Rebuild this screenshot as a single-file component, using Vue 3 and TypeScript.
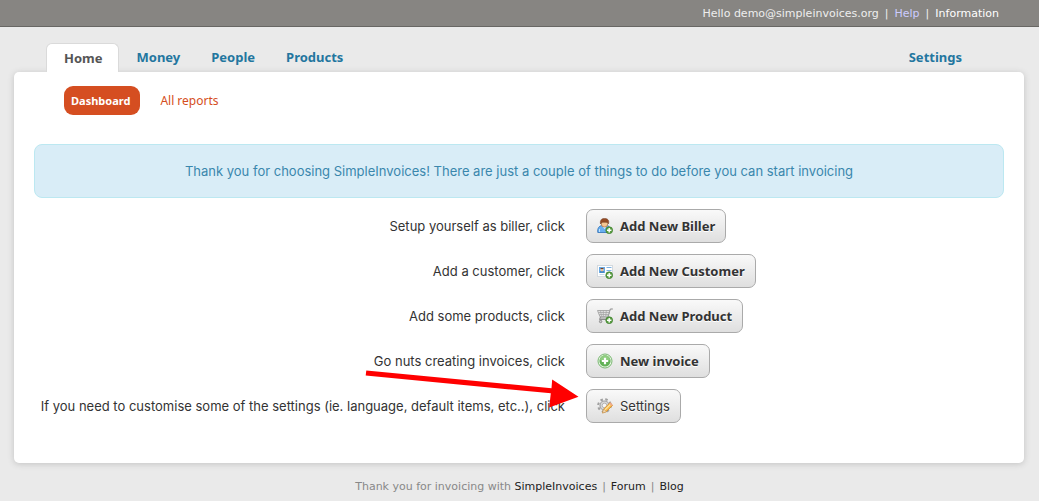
<script setup lang="ts">
type IconName = 'biller' | 'customer' | 'product' | 'invoice' | 'settings'
interface Step {
  text: string
  button: string
  icon: IconName
  strong: boolean
}
const tabs: string[] = ['Home', 'Money', 'People', 'Products']
const steps: Step[] = [
  { text: 'Setup yourself as biller, click', button: 'Add New Biller', icon: 'biller', strong: true },
  { text: 'Add a customer, click', button: 'Add New Customer', icon: 'customer', strong: true },
  { text: 'Add some products, click', button: 'Add New Product', icon: 'product', strong: true },
  { text: 'Go nuts creating invoices, click', button: 'New invoice', icon: 'invoice', strong: true },
  {
    text: 'If you need to customise some of the settings (ie. language, default items, etc..), click',
    button: 'Settings',
    icon: 'settings',
    strong: false,
  },
]
const hasBadge = (icon: IconName): boolean => ['biller', 'customer', 'product'].includes(icon)
</script>

<template>
  <div class="page">
    <header class="topbar">
      <span>Hello demo@simpleinvoices.org</span>
      <span>|</span>
      <a class="help" href="#">Help</a>
      <span>|</span>
      <a class="info-link" href="#">Information</a>
    </header>

    <nav class="tabs">
      <a v-for="(tab, i) in tabs" :key="tab" href="#" class="tab" :class="{ active: i === 0 }">{{ tab }}</a>
      <a href="#" class="tab last">Settings</a>
    </nav>

    <main class="panel">
      <nav class="subnav">
        <a href="#" class="sub current">Dashboard</a>
        <a href="#" class="sub">All reports</a>
      </nav>

      <p class="notice">
        Thank you for choosing SimpleInvoices! There are just a couple of things to do before you can start invoicing
      </p>

      <div class="steps">
        <div v-for="step in steps" :key="step.button" class="step">
          <div class="label">
            {{ step.text }}
            <svg v-if="step.icon === 'settings'" class="arrow" width="220" height="48" viewBox="0 0 220 48">
              <path d="M6.300 5.500 191.500 23.200 192.200 14.500 218.500 31.800 189.200 42.600 190.800 28.300 5.700 10.500Z" fill="#f00" />
            </svg>
          </div>
          <div>
            <button type="button" class="btn" :class="{ strong: step.strong }">
              <svg width="16" height="16" viewBox="0 0 16 16" aria-hidden="true">
                <g v-if="step.icon === 'biller'">
                  <path d="M.8 14.500c-.6-4.200 1.200-6.600 4.200-7h4.800c2.600.4 3.900 2.400 3.900 7Z" fill="#69aff0" stroke="#2c6eb5" stroke-width=".8" />
                  <path d="M5.200 8h4.600L7.500 11Z" fill="#e8f5ff" />
                  <rect x="4.300" y="2.500" width="6.400" height="6.500" rx="3" fill="#f5c591" stroke="#a86c3f" stroke-width=".7" />
                  <path d="M3.500 6C2.800 2.200 4.500.4 7.500.4s5 1.800 4 5.400L10 4.300 5.200 4.200Z" fill="#944a24" stroke="#6b3519" stroke-width=".5" />
                  <path d="M2.500 11v3" stroke="#bfe1ff" />
                </g>
                <g v-else-if="step.icon === 'customer'">
                  <rect x=".5" y="2.500" width="15" height="11" fill="#fff" stroke="#d3d9de" />
                  <rect x="2.500" y="4.500" width="5" height="5" fill="#8dc4f5" stroke="#6aa9e2" />
                  <path d="M3 9.500V8.300h4v1.200Z" fill="#286fb4" />
                  <rect x="3.800" y="5.500" width="2.400" height="2.700" fill="#efbc8b" />
                  <path d="M3.500 6V5h3v1Z" fill="#73412a" />
                  <path d="M9.500 4.500h5M9.500 7.500h5" stroke="#7fb2e4" />
                  <path d="M2.500 11.500h5" stroke="#c9dcec" />
                </g>
                <g v-else-if="step.icon === 'product'" fill="none" stroke="#8a8a8a">
                  <path d="M15.800 1H13.300l-2.600 9H3" />
                  <path d="M.5 2.500h12.300L11 8.200 3 8.800Z" fill="#e2e2e2" stroke="#999" stroke-width=".8" />
                  <path d="M1.500 4.500h10.700M2.300 6.500h9.200M3.500 2.500l1 6M6.300 2.500v6M9.300 2.500 8.800 8" stroke="#a0a0a0" stroke-width=".7" />
                  <path d="M3.500 8.800 2.500 11.500h9" />
                  <circle cx="3.600" cy="13.500" r="1.200" fill="#ccc" />
                </g>
                <g v-else-if="step.icon === 'invoice'">
                  <circle cx="8" cy="8" r="7" fill="#eef8eb" stroke="#6bb062" stroke-width=".9" />
                  <circle cx="8" cy="8" r="5.600" fill="#62b257" />
                  <path d="M3 7a5 5 0 0 1 10 0q-5 2-10 0" fill="#8fcd80" />
                  <path d="M8 4.800v6.400M4.800 8h6.400" stroke="#fff" stroke-width="2.200" />
                </g>
                <g v-else>
                  <circle cx="7.500" cy="7.500" r="6.300" fill="none" stroke="#a0a0a0" stroke-width="2" stroke-dasharray="2.500 2.448" />
                  <circle cx="7.500" cy="7.500" r="4.500" fill="#d8d8d8" stroke="#a4a4a4" stroke-width="1.200" />
                  <circle cx="7.500" cy="7.500" r="2.300" fill="#f6f6f6" stroke="#aaa" stroke-width=".8" />
                  <path d="m5.500 15 1.200-4 6.200-6.200 2.600 2.600-6.200 6.300Z" fill="#f9b94a" stroke="#d08a2c" stroke-width=".8" />
                  <path d="m7.800 12 5.800-5.700" stroke="#ffe49b" stroke-width="1.200" />
                  <path d="m12.200 5.500 1.200-1.200 2.300 2.400-1.100 1.300Z" fill="#eea888" />
                  <path d="m5.500 15 1.200-4 2.600 2.700Z" fill="#f6dfbd" stroke="#b9905b" stroke-width=".5" />
                </g>
                <g v-if="hasBadge(step.icon)">
                  <circle cx="12.200" cy="12.200" r="3.400" fill="#5da044" stroke="#3b7d2c" stroke-width=".7" />
                  <path d="M12.200 10v4.400M10 12.200h4.400" stroke="#fff" stroke-width="1.400" />
                </g>
              </svg>
              <span>{{ step.button }}</span>
            </button>
          </div>
        </div>
      </div>
    </main>

    <footer class="footer">
      <span>Thank you for invoicing with <a href="#">SimpleInvoices</a></span>
      <span>|</span>
      <a href="#">Forum</a>
      <span>|</span>
      <a href="#">Blog</a>
    </footer>
  </div>
</template>

<style>
body {
  margin: 0;
  background: #eaeaea;
}
</style>

<style scoped>
.page {
  font: 13px/18px Inter, Verdana, sans-serif;
  color: #333;
}
a {
  text-decoration: none;
}
.topbar {
  display: flex;
  justify-content: flex-end;
  gap: 6px;
  height: 26px;
  padding-right: 40px;
  border-bottom: 1px solid #686764;
  background: #878582;
  color: #eee;
  font: 11px/28px Verdana, "DejaVu Sans", sans-serif;
}
.help {
  color: #ccf;
}
.info-link {
  color: #fff;
}
.tabs {
  display: flex;
  gap: 1px;
  margin: 16px 62px 0 46px;
  font: bold 13px/29px "Trebuchet MS", "Noto Sans", sans-serif;
}
.tab {
  height: 29px;
  padding: 0 15px;
  color: #23769f;
}
.tab.active {
  position: relative;
  z-index: 1;
  box-sizing: border-box;
  margin-right: 2px;
  padding: 0 15px 0 17px;
  border: 1px solid #dadada;
  border-bottom: 0;
  border-radius: 6px 6px 0 0;
  background: #fff;
  color: #555;
  line-height: 28px;
}
.tab.last {
  margin-left: auto;
}
.panel {
  margin: 0 15px 0 14px;
  padding: 14px 0 40px;
  border-radius: 5px;
  background: #fff;
  box-shadow: 0 1px 6px #c2c2c2;
}
.subnav {
  display: flex;
  gap: 13px;
  margin-left: 50px;
  font: 12px/29px "Trebuchet MS", "Noto Sans", sans-serif;
}
.sub {
  padding: 0 7px;
  color: #d54e21;
}
.current {
  padding-right: 10px;
  border-radius: 9px;
  background: #d54e21;
  color: #fff;
  font-size: 11px;
  font-weight: bold;
}
.notice {
  margin: 29px 20px 11px;
  padding: 17px 10px;
  border: 1px solid #bce8f1;
  border-radius: 8px;
  background: #d9edf7;
  color: #3a87ad;
  text-align: center;
}
.steps {
  display: grid;
  gap: 11px;
}
.step {
  display: grid;
  grid-template-columns: minmax(0, 551fr) minmax(0, 438fr);
  gap: 21px;
}
.label {
  position: relative;
  line-height: 34px;
  text-align: right;
  white-space: nowrap;
}
.arrow {
  position: absolute;
  top: -24px;
  right: -15px;
}
.btn {
  display: flex;
  align-items: center;
  gap: 7px;
  height: 34px;
  padding: 0 10px;
  border: 1px solid #aaa;
  border-radius: 7px;
  background: linear-gradient(#f9f9f9, #dfdfdf);
  color: #333;
  font: 13px/18px Inter, Verdana, sans-serif;
  text-shadow: 0 1px 0 #fff;
}
.strong {
  font: bold 13px/18px "Noto Sans", sans-serif;
}
.footer {
  display: flex;
  justify-content: center;
  gap: 5px;
  padding: 15px 0 5px;
  color: #888;
  font: 11px/18px Verdana, "DejaVu Sans", sans-serif;
}
.footer a {
  color: #222;
}
</style>
